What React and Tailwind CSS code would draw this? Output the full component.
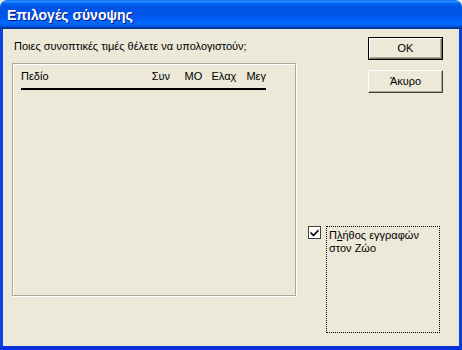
export default function App() {
  return (
    <div className="flex h-[350px] w-[462px] flex-col bg-[#ece9d8] font-['Liberation_Sans',Arial,sans-serif] text-[11px] leading-[13px] text-black">
      {/* Title bar */}
      <div className="flex h-[29px] shrink-0 items-center rounded-t-[7px] bg-[linear-gradient(to_bottom,#0058ee_0%,#3593ff_4%,#288eff_6%,#127dff_8%,#036ffc_10%,#0262ee_14%,#0057e5_20%,#0054e3_24%,#0055eb_56%,#005bf5_66%,#026afe_76%,#0062ef_86%,#0052d6_92%,#0040ab_94%,#003092_100%)] pl-[7px]">
        <span className="text-[14px] font-bold leading-[16px] text-white [text-shadow:1px_1px_0_#0a1883]">
          Επιλογές σύνοψης
        </span>
      </div>

      {/* Body */}
      <div className="flex flex-1 border-x-[3px] border-b-[4px] border-x-[#0842e3] border-b-[#0831d9] bg-[#ece9d8]">
        {/* Left side */}
        <div className="flex w-[293px] flex-col pl-[9px] pt-[11px]">
          <p className="pl-[2px]">Ποιες συνοπτικές τιμές θέλετε να υπολογιστούν;</p>

          <div className="mt-[10px] h-[233px] w-[284px] border border-[#aca899] px-[8px] pt-[6px] shadow-[inset_1px_1px_0_#fff,1px_1px_0_#fff]">
            <div className="flex w-[245px]">
              <span className="w-[131px]">Πεδίο</span>
              <span className="w-[33px]">Συν</span>
              <span className="w-[27px]">ΜΟ</span>
              <span className="w-[35px]">Ελαχ</span>
              <span>Μεγ</span>
            </div>
            <div className="mt-[5px] h-[2px] w-[245px] bg-black" />
          </div>
        </div>

        {/* Right side */}
        <div className="flex flex-1 flex-col pt-[8px]">
          <div className="flex flex-col gap-[10px] pl-[72px]">
            <button className="flex h-[23px] w-[75px] items-center justify-center border border-black bg-[#ece9d8]">
              <span className="flex h-full w-full items-center justify-center border border-b-[#716f64] border-l-white border-r-[#716f64] border-t-white shadow-[inset_-1px_-1px_0_#aca899]">
                OK
              </span>
            </button>
            <button className="flex h-[23px] w-[75px] items-center justify-center border border-b-[#404040] border-l-white border-r-[#404040] border-t-white bg-[#ece9d8] shadow-[inset_-1px_-1px_0_#aca899]">
              Άκυρο
            </button>
          </div>

          <div className="mt-[133px] flex items-start pl-[12px]">
            <span className="flex h-[13px] w-[13px] items-center justify-center border border-[#404040] bg-white">
              <svg width="9" height="9" viewBox="0 0 9 9">
                <path d="M0.5 3.5 L3.5 6.2 L8.5 1 L8.5 3.5 L3.5 8.5 L0.5 5.8 Z" fill="#000" />
              </svg>
            </span>
            <div className="ml-[5px] h-[107px] w-[114px] border border-dotted border-black pl-[2px] pt-[2px]">
              Π<span className="underline">λ</span>ήθος εγγραφών
              <br />
              στον Ζώο
            </div>
          </div>
        </div>
      </div>
    </div>
  );
}
